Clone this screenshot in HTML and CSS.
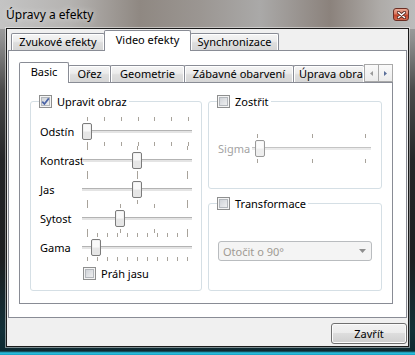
FILE: index.html
```html
<!DOCTYPE html>
<html lang="cs">
<head>
    <meta charset="UTF-8">
    <title>Úpravy a efekty</title>
    <link rel="stylesheet" href="styles.css">
</head>
<body>
    <div class="window">
        <div class="titlebar">
            <span class="title">Úpravy a efekty</span>
            <span class="close-btn">
                <svg width="9" height="8" viewBox="0 0 9 8"><path d="M1.5 1.5 L7.5 6.5 M7.5 1.5 L1.5 6.5" stroke="#5a2a22" stroke-width="3.2" stroke-linecap="round"/><path d="M1.5 1.5 L7.5 6.5 M7.5 1.5 L1.5 6.5" stroke="#fff" stroke-width="1.6" stroke-linecap="round"/></svg>
            </span>
        </div>

        <div class="client">
            <div class="tabs outer-tabs">
                <div class="tab w-audio">Zvukové efekty</div>
                <div class="tab active w-video">Video efekty</div>
                <div class="tab w-sync">Synchronizace</div>
            </div>

            <div class="pane outer-pane">
                <div class="tabs inner-tabs">
                    <div class="tab active w-basic">Basic</div>
                    <div class="tab w-crop">Ořez</div>
                    <div class="tab w-geo">Geometrie</div>
                    <div class="tab w-fun">Zábavné obarvení</div>
                    <div class="tab clipped">Úprava obra</div>
                    <div class="scroll-btns">
                        <span class="scroll-btn">
                            <svg width="3" height="5" viewBox="0 0 3 5"><path d="M3 0 L0 2.5 L3 5 Z" fill="#9a9a9a"/></svg>
                        </span>
                        <span class="scroll-btn">
                            <svg width="3" height="5" viewBox="0 0 3 5"><path d="M0 0 L3 2.5 L0 5 Z" fill="#5a6f9a"/></svg>
                        </span>
                    </div>
                </div>

                <div class="pane inner-pane">
                    <fieldset class="group adjust">
                        <legend>
                            <span class="cb"><svg width="9" height="9" viewBox="0 0 9 9"><path d="M1.3 4.6 L3.4 7 L7.8 1.4" fill="none" stroke="#4a63a6" stroke-width="1.7"/></svg></span>
                            Upravit obraz
                        </legend>

                        <div class="slider-row">
                            <span class="slider-label">Odstín</span>
                            <svg class="slider" width="110" height="29" viewBox="0 0 110 29">
                                <path class="ticks" d="M5.5 0v4M22.5 0v4M39.5 0v4M56.5 0v4M72.5 0v4M89.5 0v4M106.5 0v4M5.5 25v4M22.5 25v4M39.5 25v4M56.5 25v4M72.5 25v4M89.5 25v4M106.5 25v4"/>
                                <rect x="0" y="13" width="110" height="1" fill="#b3b3b3"/>
                                <rect x="0" y="14" width="110" height="2" fill="#e4e4e4"/>
                                <rect x="0.5" y="6.5" width="9" height="16" rx="1.5" fill="#e6e6e6" stroke="#7b7b7b"/>
                                <rect x="1.5" y="7.5" width="7" height="7" fill="#f9f9f9"/>
                            </svg>
                        </div>
                        <div class="slider-row">
                            <span class="slider-label">Kontrast</span>
                            <svg class="slider" width="110" height="29" viewBox="0 0 110 29">
                                <path class="ticks" d="M5.5 0v4M55.5 0v4M105.5 0v4M5.5 25v4M55.5 25v4M105.5 25v4"/>
                                <rect x="0" y="13" width="110" height="1" fill="#b3b3b3"/>
                                <rect x="0" y="14" width="110" height="2" fill="#e4e4e4"/>
                                <rect x="50.5" y="6.5" width="9" height="16" rx="1.5" fill="#e6e6e6" stroke="#7b7b7b"/>
                                <rect x="51.5" y="7.5" width="7" height="7" fill="#f9f9f9"/>
                            </svg>
                        </div>
                        <div class="slider-row">
                            <span class="slider-label">Jas</span>
                            <svg class="slider" width="110" height="29" viewBox="0 0 110 29">
                                <path class="ticks" d="M5.5 0v4M55.5 0v4M105.5 0v4M5.5 25v4M55.5 25v4M105.5 25v4"/>
                                <rect x="0" y="13" width="110" height="1" fill="#b3b3b3"/>
                                <rect x="0" y="14" width="110" height="2" fill="#e4e4e4"/>
                                <rect x="50.5" y="6.5" width="9" height="16" rx="1.5" fill="#e6e6e6" stroke="#7b7b7b"/>
                                <rect x="51.5" y="7.5" width="7" height="7" fill="#f9f9f9"/>
                            </svg>
                        </div>
                        <div class="slider-row">
                            <span class="slider-label">Sytost</span>
                            <svg class="slider" width="110" height="29" viewBox="0 0 110 29">
                                <path class="ticks" d="M5.5 0v4M38.5 0v4M72.5 0v4M105.5 0v4M5.5 25v4M38.5 25v4M72.5 25v4M105.5 25v4"/>
                                <rect x="0" y="13" width="110" height="1" fill="#b3b3b3"/>
                                <rect x="0" y="14" width="110" height="2" fill="#e4e4e4"/>
                                <rect x="33.5" y="6.5" width="9" height="16" rx="1.5" fill="#e6e6e6" stroke="#7b7b7b"/>
                                <rect x="34.5" y="7.5" width="7" height="7" fill="#f9f9f9"/>
                            </svg>
                        </div>
                        <div class="slider-row">
                            <span class="slider-label">Gama</span>
                            <svg class="slider" width="110" height="29" viewBox="0 0 110 29">
                                <path class="ticks" d="M5.5 0v4M15.5 0v4M25.5 0v4M35.5 0v4M45.5 0v4M55.5 0v4M65.5 0v4M75.5 0v4M85.5 0v4M95.5 0v4M105.5 0v4M5.5 24v4M15.5 24v4M25.5 24v4M35.5 24v4M45.5 24v4M55.5 24v4M65.5 24v4M75.5 24v4M85.5 24v4M95.5 24v4M105.5 24v4"/>
                                <rect x="0" y="13" width="110" height="1" fill="#b3b3b3"/>
                                <rect x="0" y="14" width="110" height="2" fill="#e4e4e4"/>
                                <rect x="9.5" y="6.5" width="9" height="16" rx="1.5" fill="#e6e6e6" stroke="#7b7b7b"/>
                                <rect x="10.5" y="7.5" width="7" height="7" fill="#f9f9f9"/>
                            </svg>
                        </div>

                        <label class="check-row">
                            <span class="cb"></span>
                            Práh jasu
                        </label>
                    </fieldset>

                    <div class="right-col">
                        <fieldset class="group sharpen">
                            <legend>
                                <span class="cb"></span>
                                Zostřit
                            </legend>
                            <div class="slider-row">
                                <span class="slider-label disabled sigma">Sigma</span>
                                <svg class="slider" width="119" height="29" viewBox="0 0 119 29">
                                    <path class="ticks" d="M5.5 0v4M60.5 0v4M113.5 0v4M5.5 25v4M60.5 25v4M113.5 25v4"/>
                                    <rect x="0" y="13" width="119" height="1" fill="#c4c4c4"/>
                                    <rect x="0" y="14" width="119" height="2" fill="#ebebeb"/>
                                    <rect x="3.5" y="6.5" width="9" height="16" rx="1.5" fill="#eeeeee" stroke="#999"/>
                                    <rect x="4.5" y="7.5" width="7" height="7" fill="#fbfbfb"/>
                                </svg>
                            </div>
                        </fieldset>

                        <fieldset class="group transform">
                            <legend>
                                <span class="cb"></span>
                                Transformace
                            </legend>
                            <div class="combo">
                                <span>Otočit o 90°</span>
                                <svg width="7" height="4" viewBox="0 0 7 4"><path d="M0 0 L7 0 L3.5 4 Z" fill="#8e8e8e"/></svg>
                            </div>
                        </fieldset>
                    </div>
                </div>
            </div>

            <div class="footer">
                <button class="btn">Zavřít</button>
            </div>
        </div>
    </div>
</body>
</html>
```

FILE: styles.css
```css
* {
    box-sizing: border-box;
}
body {
    margin: 0;
    font-family: "Noto Sans", sans-serif;
    font-size: 11px;
    color: #000;
}
.window {
    width: 415px;
    height: 355px;
    padding: 0 6px 8px;
    display: flex;
    flex-direction: column;
    background:
        linear-gradient(90deg, #c4c4c4 0, #b5b3b1 70px, #8f8882 140px, #9b9692 200px, #aaa9a8 260px, #8b827c 330px, #aeaba8 380px, #bcbcbc 415px) top / 100% 29px no-repeat,
        linear-gradient(180deg, #b8b8b8 0, #8e8e8e 40px, #4a4a4a 90px, #252628 160px, #1c1f21 260px, #123038 330px, #0d2a31 351px, #2bc6e6 353px, #169cbc 355px);
}

/* title bar */
.titlebar {
    height: 28px;
    display: flex;
    justify-content: space-between;
    align-items: flex-start;
}
.title {
    font-size: 12px;
    margin-top: 6px;
    text-shadow: 0 0 6px rgba(255, 255, 255, 0.8);
}
.close-btn {
    width: 16px;
    height: 13px;
    margin-top: 8px;
    border: 1px solid #6b2f25;
    border-radius: 3px;
    background: linear-gradient(#eaa995, #d97a61 45%, #c2452d 55%, #d4684c);
    display: flex;
    align-items: center;
    justify-content: center;
}

/* client area */
.client {
    flex: 1;
    display: flex;
    flex-direction: column;
    padding: 1px 1px 2px;
    background: #f0f0f0;
    border: 1px solid #1a1a1a;
    box-shadow: 0 0 0 1px rgba(255, 255, 255, 0.45);
}

/* tabs */
.tabs {
    display: flex;
    align-items: flex-end;
    height: 21px;
    margin-bottom: -1px;
    position: relative;
    z-index: 1;
}
.outer-tabs {
    padding-left: 3px;
}
.tab {
    height: 17px;
    margin-bottom: 1px;
    margin-left: -1px;
    border: 1px solid #898c95;
    border-bottom: none;
    border-radius: 2px 2px 0 0;
    background: linear-gradient(#f5f5f5, #ececec 45%, #dedede 55%, #d6d6d6);
    box-shadow: inset 1px 1px 0 #fff, inset -1px 0 0 #fff;
    text-align: center;
    line-height: 15px;
    white-space: nowrap;
    flex: none;
}
.tabs .tab:first-child {
    margin-left: 0;
}
.tab.active {
    height: 21px;
    margin-bottom: 0;
    background: #fff;
    box-shadow: none;
    line-height: 17px;
    position: relative;
    z-index: 1;
}
.w-audio { width: 94px; }
.w-video { width: 87px; }
.w-sync { width: 89px; }
.w-basic { width: 50px; }
.w-crop { width: 43px; }
.w-geo { width: 75px; }
.w-fun { width: 110px; }
.tab.clipped {
    flex: 1;
    min-width: 0;
    text-align: left;
    padding-left: 5px;
    border-right: none;
}
.scroll-btns {
    display: flex;
    flex: none;
    margin-bottom: 1px;
}
.scroll-btn {
    width: 15px;
    height: 18px;
    border: 1px solid #a9a9a9;
    background: linear-gradient(#fafafa, #ececec);
    display: flex;
    align-items: center;
    justify-content: center;
}
.scroll-btn + .scroll-btn {
    margin-left: -1px;
}

/* panes */
.pane {
    flex: 1;
    background: #fff;
    border: 1px solid #898c95;
}
.outer-pane {
    display: flex;
    flex-direction: column;
    padding: 11px 13px 13px 10px;
}
.inner-pane {
    display: flex;
    gap: 6px;
    padding: 12px 10px;
}

/* group boxes */
.group {
    flex: 1;
    margin: 0;
    min-width: 0;
    border: 1px solid #d5dfe5;
    border-radius: 3px;
    padding: 9px 9px 0 8px;
}
.group legend {
    display: flex;
    align-items: center;
    gap: 5px;
    height: 13px;
    padding: 0 2px 0 0;
    line-height: 13px;
}
.right-col {
    flex: 1;
    display: flex;
    flex-direction: column;
    gap: 8px;
}
.sharpen {
    flex: none;
    padding-top: 26px;
    padding-bottom: 25px;
}
.transform {
    padding-top: 31px;
}

/* checkbox */
.cb {
    width: 13px;
    height: 13px;
    flex: none;
    border: 1px solid #8e8f8f;
    background: linear-gradient(135deg, #c8ccd2, #f6f6f6);
    box-shadow: inset 0 0 0 1px #f4f4f4, inset 0 0 0 2px #b3b7bc;
    display: flex;
    align-items: center;
    justify-content: center;
}
.check-row {
    display: flex;
    align-items: center;
    gap: 5px;
    margin-top: 4px;
    padding-left: 44px;
}

/* sliders */
.slider-row {
    display: flex;
    align-items: center;
    height: 29px;
}
.slider-label {
    width: 43px;
    padding-left: 1px;
    white-space: nowrap;
}
.slider-label.sigma {
    width: 35px;
}
.slider {
    display: block;
    flex: none;
}
.ticks {
    stroke: #a8a39b;
    stroke-width: 1;
}
.disabled {
    color: #a3a3a3;
}

/* combo */
.combo {
    width: 154px;
    height: 20px;
    margin-left: 1px;
    border: 1px solid #b9bcbf;
    border-radius: 3px;
    background: #f4f4f4;
    color: #a09a93;
    display: flex;
    align-items: center;
    justify-content: space-between;
    padding: 0 5px 0 4px;
}

/* footer */
.footer {
    display: flex;
    justify-content: flex-end;
    margin-top: 5px;
}
.btn {
    width: 76px;
    height: 21px;
    padding: 0;
    font: inherit;
    color: #000;
    border: 1px solid #707070;
    border-radius: 3px;
    background: linear-gradient(#f2f2f2, #ebebeb 50%, #dddddd 50%, #cfcfcf);
    box-shadow: inset 0 0 0 1px #fbfbfb;
}
```
